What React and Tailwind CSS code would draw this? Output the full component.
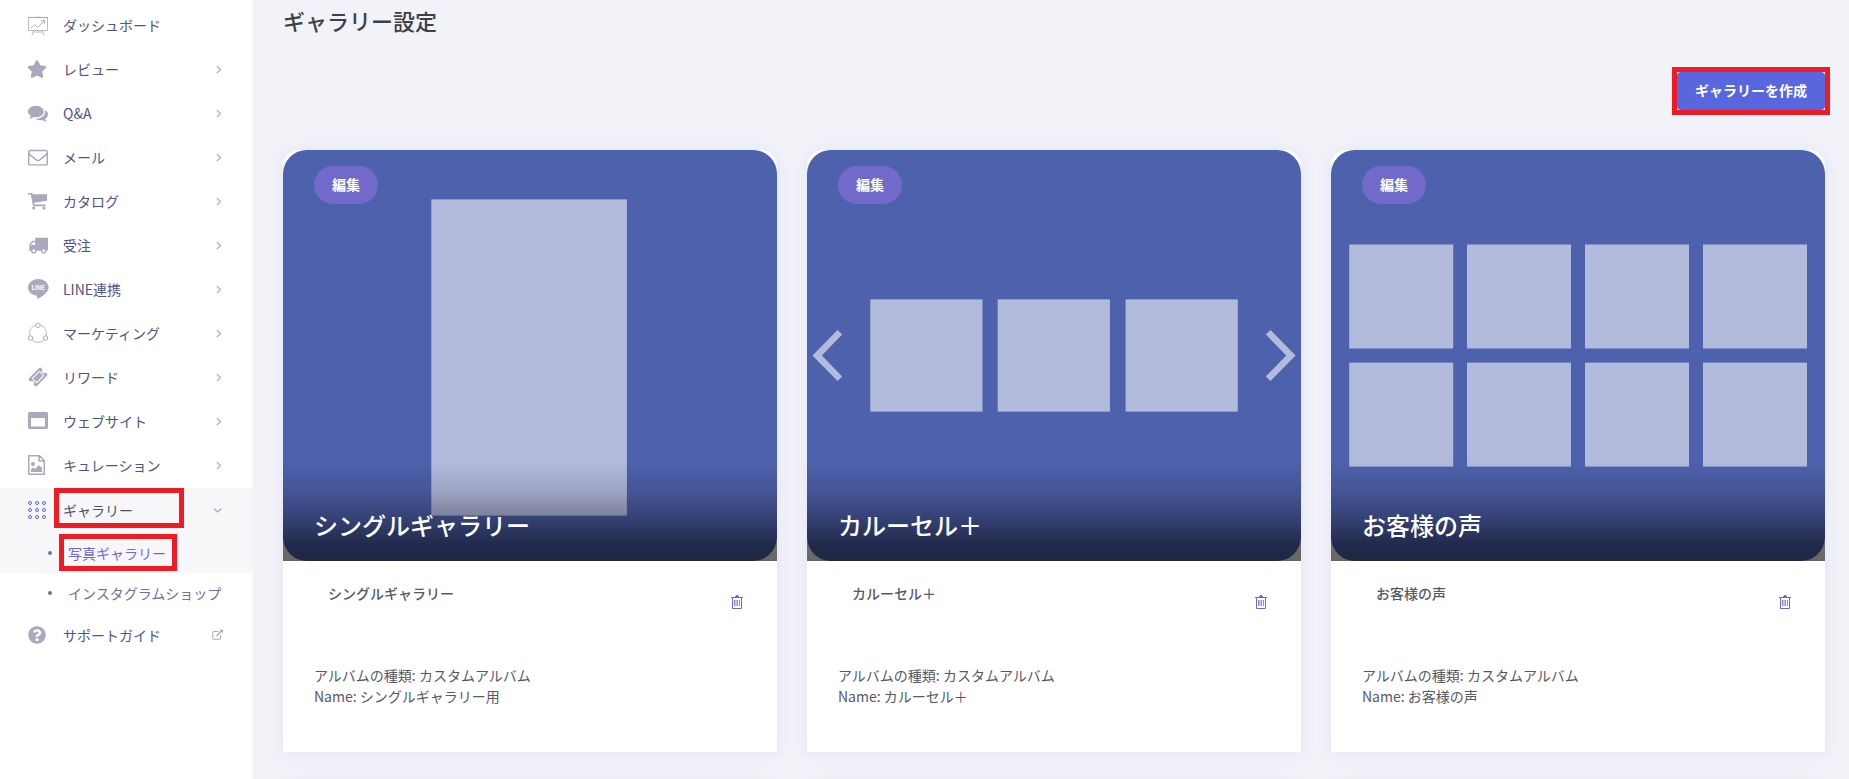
import { FaStar, FaQuestionCircle } from 'react-icons/fa';

const ENVELOPE = 'M1664 1504v-768q-32 36-69 66-268 206-426 338-51 43-83 67t-86.5 48.5-102.5 24.5h-2q-48 0-102.5-24.5t-86.5-48.5-83-67q-158-132-426-338-37-30-69-66v768q0 13 9.5 22.5t22.5 9.5h1472q13 0 22.5-9.5t9.5-22.5zm0-1051v-24.5l-.5-13-3-12.5-5.5-9-9-7.5-14-2.5h-1472q-13 0-22.5 9.5t-9.5 22.5q0 168 147 284 193 152 401 317 6 5 35 29.5t46 37.5 44.5 31.5 50.5 27.5 43 9h2q20 0 43-9t50.5-27.5 44.5-31.5 46-37.5 35-29.5q208-165 401-317 54-43 100.5-115.5t46.5-131.5zm128-37v1088q0 66-47 113t-113 47h-1472q-66 0-113-47t-47-113v-1088q0-66 47-113t113-47h1472q66 0 113 47t47 113z';
const COMMENTS = 'M1408 768q0 139-94 257t-256.5 186.5-353.5 68.5q-86 0-176-16-124 88-278 128-36 9-86 16h-3q-11 0-20.5-8t-11.5-21q-1-3-1-6.5t.5-6.5 2-6l2.5-5 3.5-5.5 4-5 4.5-5 4-4.5q5-6 23-25t26-29.5 22.5-29 25-38.5 20.5-44q-124-72-195-177t-71-224q0-139 94-257t256.5-186.5 353.5-68.5 353.5 68.5 256.5 186.5 94 257zm384 256q0 120-71 224.5t-195 176.5q10 24 20.5 44t25 38.5 22.5 29 26 29.5 23 25q1 1 4 4.5t4.5 5 4 5 3.5 5.5l2.5 5 2 6 .5 6.5-1 6.5q-3 14-13 22t-22 7q-50-7-86-16-154-40-278-128-90 16-176 16-271 0-472-132 58 4 88 4 161 0 309-45t264-129q125-92 192-212t67-254q0-77-23-152 129 71 204 178t75 230z';
const TRUCK = 'M640 1408q0-52-38-90t-90-38-90 38-38 90 38 90 90 38 90-38 38-90zm-384-512h384v-256h-158q-13 0-22 9l-195 195q-9 9-9 22v30zm1280 512q0-52-38-90t-90-38-90 38-38 90 38 90 90 38 90-38 38-90zm256-1088v1024q0 15-4 26.5t-13.5 18.5-16.5 11.5-23.5 6-22.5 2-25.5 0-22.5-.5q0 106-75 181t-181 75-181-75-75-181h-384q0 106-75 181t-181 75-181-75-75-181h-64q-3 0-22.5.5t-25.5 0-22.5-2-23.5-6-16.5-11.5-13.5-18.5-4-26.5q0-26 19-45t45-19v-320q0-8-.5-35t0-38 2.5-34.5 6.5-37 14-30.5 22.5-30l198-198q19-19 50.5-32t58.5-13h160v-192q0-26 19-45t45-19h1024q26 0 45 19t19 45z';
const TICKET = 'M1024 452l316 316-572 572-316-316zm-211 979l618-618q19-19 19-45t-19-45l-362-362q-18-18-45-18t-45 18l-618 618q-19 19-19 45t19 45l362 362q18 18 45 18t45-18zm889-637l-907 908q-37 37-90.5 37t-90.5-37l-126-126q56-56 56-136t-56-136-136-56-136 56l-125-126q-37-37-37-90.5t37-90.5l907-906q37-37 90.5-37t90.5 37l125 125q-56 56-56 136t56 136 136 56 136-56l126 125q37 37 37 90.5t-37 90.5z';

const MENU = [
  { label: 'ダッシュボード', icon: <DashboardIcon />, leaf: true },
  { label: 'レビュー', icon: <FaStar size={20} /> },
  { label: 'Q&A', icon: <Glyph d={COMMENTS} /> },
  { label: 'メール', icon: <Glyph d={ENVELOPE} /> },
  { label: 'カタログ', icon: <CartIcon /> },
  { label: '受注', icon: <Glyph d={TRUCK} /> },
  { label: 'LINE連携', icon: <LineIcon /> },
  { label: 'マーケティング', icon: <CycleIcon /> },
  { label: 'リワード', icon: <Glyph d={TICKET} /> },
  { label: 'ウェブサイト', icon: <WindowIcon /> },
  { label: 'キュレーション', icon: <FileImageIcon /> },
];

const GALLERIES = [
  { title: 'シングルギャラリー', name: 'シングルギャラリー用', art: <SingleArt /> },
  { title: 'カルーセル＋', name: 'カルーセル＋', art: <CarouselArt /> },
  { title: 'お客様の声', name: 'お客様の声', art: <GridArt /> },
];

export default function App() {
  return (
    <div className="flex h-screen overflow-hidden bg-[#f2f3f8] font-['Noto_Sans_CJK_JP',sans-serif] text-sm text-[#575962]">
      <Sidebar />
      <main className="min-w-0 flex-1 pr-6 pl-[30px]">
        <h1 className="pt-1 text-[22px] leading-8 font-medium text-[#3f4047]">ギャラリー設定</h1>
        <div className="mt-[31px] -mr-[5px] flex justify-end">
          <div className="border-5 border-[#ed1c24] bg-white">
            <button className="block h-[38px] rounded-sm bg-[#5867dd] px-[18px] pb-0.5 font-bold text-white">
              ギャラリーを作成
            </button>
          </div>
        </div>
        <div className="mt-[35px] grid grid-cols-3 gap-[30px]">
          {GALLERIES.map(g => <GalleryCard key={g.title} {...g} />)}
          {GALLERIES.map(g => <div key={g.title} className="h-10 rounded-t-2xl bg-white shadow-[0_1px_15px_1px_rgba(113,106,202,0.11)]" />)}
        </div>
      </main>
    </div>
  );
}

function Sidebar() {
  return (
    <nav className="w-[253px] shrink-0 bg-white pt-[3px] text-[#50557f]">
      {MENU.map(item => (
        <MenuRow key={item.label} icon={item.icon} label={item.label}>
          {!item.leaf && <Chevron />}
        </MenuRow>
      ))}

      <div className="mt-px bg-[#f7f7fa]">
        <a href="#gallery" className="flex h-[45px] items-center pr-[30px] pb-px pl-[27px] text-[#4c4f6c]">
          <span className="flex w-9 text-[#5867dd]"><DotsIcon /></span>
          <span className="relative flex-1">
            ギャラリー
            <Highlight className="-top-3 -left-[9px] h-10 w-[130px]" />
          </span>
          <Chevron open />
        </a>
        <SubItem label="写真ギャラリー" active />
      </div>
      <SubItem label="インスタグラムショップ" />

      <MenuRow icon={<FaQuestionCircle size={18} className="ml-px" />} label="サポートガイド">
        <ExternalIcon />
      </MenuRow>
    </nav>
  );
}

function MenuRow({ icon, label, children }) {
  return (
    <a href="#menu" className="flex h-11 items-center pr-[29px] pl-[27px]">
      <span className="flex w-9 text-[#a9a9bd]">{icon}</span>
      <span className="flex-1">{label}</span>
      {children}
    </a>
  );
}

function SubItem({ label, active }) {
  return (
    <a
      href="#sub"
      className={active
        ? 'flex h-10 items-center pl-12 text-[#716aca]'
        : 'flex h-10 items-center pl-12 text-[#6e7199]'}
    >
      <span className="mr-4 size-1 rounded-full bg-current" />
      <span className="relative">
        {label}
        {active && <Highlight className="-top-[9px] -left-[9px] h-[37px] w-[118px]" />}
      </span>
    </a>
  );
}

function Highlight({ className }) {
  return <span className={`pointer-events-none absolute border-5 border-[#ed1c24] ${className}`} />;
}

function GalleryCard({ title, name, art }) {
  return (
    <section className="rounded-t-2xl bg-white shadow-[0_1px_15px_1px_rgba(113,106,202,0.11)]">
      <div className="relative">
        <div className="overflow-hidden rounded-3xl bg-[#4e61ac]">{art}</div>
        <div className="absolute inset-x-0 bottom-0 h-[101px] bg-[linear-gradient(to_bottom,transparent,rgba(0,0,0,0.12)_30%,rgba(0,0,0,0.3)_55%,rgba(0,0,0,0.57)_84%,rgba(0,0,0,0.6))]" />
        <button className="absolute top-4 left-[31px] h-[38px] rounded-full bg-[#716aca] px-[18px] pb-0.5 font-bold text-white">編集</button>
        <h2 className="absolute bottom-[18px] left-[31px] text-2xl leading-9 font-medium text-white">{title}</h2>
      </div>
      <div className="px-[31px] pt-[22px] pb-[45px]">
        <div className="flex justify-between pr-[3px] pl-3.5">
          <h3 className="leading-[21px] font-medium">{title}</h3>
          <button aria-label="削除" className="mt-3 text-[#716aca]"><TrashIcon /></button>
        </div>
        <div className="mt-[56px] leading-[21px]">
          <p>アルバムの種類: カスタムアルバム</p>
          <p>Name: {name}</p>
        </div>
      </div>
    </section>
  );
}

function Art({ children }) {
  return (
    <svg viewBox="0 0 494 411" className="block w-full" fill="#b3bbdd">
      {children}
    </svg>
  );
}

function SingleArt() {
  return <Art><rect x="148.3" y="49.4" width="195.6" height="316.2" /></Art>;
}

function CarouselArt() {
  return (
    <Art>
      {[63.3, 190.7, 318.6].map(x => <rect key={x} x={x} y="149.4" width="112.2" height="112.2" />)}
      <path d="M5.5 205.5L30.5 180L35.2 184.500L14.800 205.5L35.2 226.5L30.500 231Z" />
      <path d="M488.5 205.5L463.5 180L458.8 184.5L479.2 205.5L458.8 226.5L463.5 231Z" />
    </Art>
  );
}

function GridArt() {
  return (
    <Art>
      {[94.5, 212.6].map(y =>
        [18.2, 136, 254, 372].map(x => <rect key={`${x}-${y}`} x={x} y={y} width="104" height="104" />)
      )}
    </Art>
  );
}

function Glyph({ d }) {
  return <svg width="20" height="20" viewBox="0 0 1792 1792" fill="currentColor" className="ml-px"><path d={d} /></svg>;
}

function Chevron({ open }) {
  return (
    <svg width="10" height="10" viewBox="0 0 10 10" fill="none" stroke="#a9a9bd" strokeWidth="1.1" className={open ? '' : 'mr-px'}>
      <path d={open ? 'M1 3.5L4.7 7L8.4 3.5' : 'M4 2L7.5 5.5L4 9'} />
    </svg>
  );
}

function DashboardIcon() {
  return (
    <svg width="22" height="22" viewBox="0 0 22 22" fill="none" stroke="currentColor">
      <path d="M1 3.5H21" strokeWidth="1.2" />
      <path d="M1.5 4V16.5H20.5V4M11 2V3.5M6.5 17L5 21.5M15.5 17L17 21.5M6 18H16" strokeWidth=".8" />
      <path d="M4 14L7.5 10.5L10.5 13.5L17 7M14 6.5H17.5V10" strokeWidth=".9" />
    </svg>
  );
}

function CartIcon() {
  return (
    <svg width="22" height="22" viewBox="0 0 22 22" fill="currentColor">
      <path d="M1 3h4.2l.6 1.3H20V10.8l-13 2 .4 1.7H18.6v1.8H6L3.8 4.5H1z" />
      <circle cx="6.7" cy="18" r="1.6" />
      <circle cx="17" cy="18" r="1.6" />
    </svg>
  );
}

function LineIcon() {
  return (
    <svg width="22" height="22" viewBox="0 0 22 22" fill="currentColor">
      <path d="M11.3 1C5.6 1 1 4.8 1 9.4c0 4 3.6 7.4 8.4 8.1 1 .2.8 1.3.7 2.7 0 .5.3.7.8.4 3.6-1.8 10.7-6.2 10.7-11.2C21.6 4.8 17 1 11.3 1z" />
      <text x="11.2" y="11.6" textAnchor="middle" fontSize="6" fontWeight="700" fill="#fff">LINE</text>
    </svg>
  );
}

function CycleIcon() {
  return (
    <svg width="22" height="22" viewBox="0 0 22 22" fill="none" stroke="currentColor" strokeWidth=".8">
      <path d="M8.5 3.2A8.8 8.8 0 0 0 2.7 13.8M13.5 3.2A8.8 8.8 0 0 1 19.3 13.8M5.2 18.2A8.8 8.8 0 0 0 16.8 18.2" />
      <circle cx="11" cy="3.3" r="2.2" strokeWidth="1" />
      <circle cx="3.5" cy="16" r="2.2" strokeWidth="1" />
      <circle cx="18.5" cy="16" r="2.2" strokeWidth="1" />
    </svg>
  );
}

function WindowIcon() {
  return (
    <svg width="22" height="22" viewBox="0 0 22 22" fill="currentColor" fillRule="evenodd">
      <path d="M2.5 2h17A1.5 1.5 0 0 1 21 3.5v14a1.5 1.5 0 0 1-1.5 1.5h-17A1.5 1.5 0 0 1 1 17.5v-14A1.5 1.5 0 0 1 2.5 2zM4 8v8.5h14V8z" />
    </svg>
  );
}

function FileImageIcon() {
  return (
    <svg width="22" height="22" viewBox="0 0 22 22" fill="none" stroke="currentColor" strokeWidth="1.5" strokeLinejoin="round">
      <path d="M1.8 1.8H12.5L17.3 6.5V20.3H1.8ZM12 2V7H17" />
      <circle cx="6" cy="10" r="2" fill="currentColor" stroke="none" />
      <path d="M4 18V15.5L6 13.5L8 15L12 11L15 14V18Z" fill="currentColor" stroke="none" />
    </svg>
  );
}

function DotsIcon() {
  return (
    <svg width="22" height="22" viewBox="0 0 22 22" fill="none" stroke="currentColor" strokeWidth="1">
      {[4, 11, 18].map(y => [3, 10, 17].map(x => <circle key={`${x}-${y}`} cx={x} cy={y} r="1.5" />))}
    </svg>
  );
}

function ExternalIcon() {
  return (
    <svg width="12" height="12" viewBox="0 0 12 12" fill="none" stroke="#a9a9bd">
      <path d="M6.5 2.5H1.5A.8.8 0 0 0 .8 3.3V9.5A.8.8 0 0 0 1.5 10.3H7.7A.8.8 0 0 0 8.5 9.5V6.5" />
      <path d="M4.5 7L10 1.5" strokeWidth="1.3" />
      <path d="M7.5 .8H11V4.3Z" fill="#a9a9bd" stroke="none" />
    </svg>
  );
}

function TrashIcon() {
  return (
    <svg width="12" height="14" viewBox="0 0 12 14" fill="none" stroke="currentColor">
      <path d="M0 2.5H12M1.5 2.5V13.5H10.5V2.5" />
      <path d="M4 1.5H8M5 .5H7" />
      <path d="M3.5 5V11M5 5V11M6.5 5V11M8.5 5V11" strokeWidth=".8" />
    </svg>
  );
}
